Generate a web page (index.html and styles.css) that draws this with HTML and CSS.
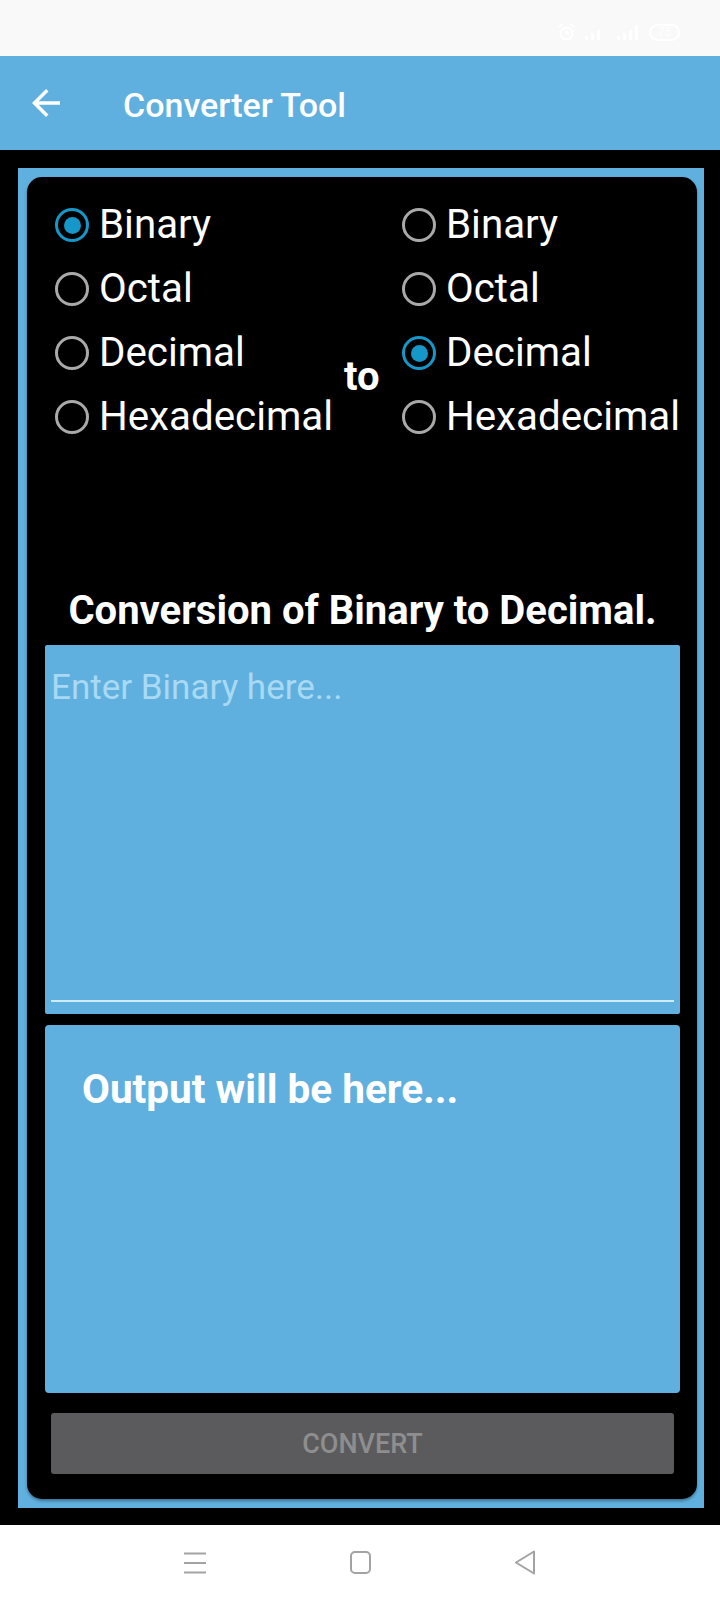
FILE: index.html
```html
<!DOCTYPE html>
<html lang="en">
<head>
<meta charset="utf-8">
<title>Converter Tool</title>
<link rel="stylesheet" href="styles.css">
</head>
<body>
<div class="status">
  <svg class="st-icons" width="84" height="20" viewBox="0 0 84 20" fill="none" stroke="#fff" stroke-width="2" stroke-linecap="round">
    <circle cx="10.5" cy="11.5" r="6"/>
    <path d="M3.5 4.5 L6.5 2 M17.5 4.5 L14.5 2 M10.5 8.5 V11.5 H13"/>
    <g fill="#fff" stroke="none">
      <rect x="29" y="14" width="3" height="4"/>
      <rect x="35" y="11" width="3" height="7"/>
      <rect x="41" y="8" width="3" height="10"/>
      <rect x="61" y="14" width="3" height="4"/>
      <rect x="67" y="11" width="3" height="7"/>
      <rect x="73" y="8" width="3" height="10"/>
      <rect x="79" y="3" width="3" height="15"/>
    </g>
  </svg>
  <span class="battery">75</span>
</div>

<header class="appbar">
  <svg class="back" width="42" height="42" viewBox="0 0 24 24"><path fill="#fff" d="M20 11H7.83l5.59-5.59L12 4l-8 8 8 8 1.41-1.41L7.83 13H20v-2z"/></svg>
  <h1 class="title">Converter Tool</h1>
</header>

<main class="main">
  <div class="frame">
    <div class="card">
      <div class="radios">
        <div class="col col-left">
          <div class="radio"><span class="dot on"></span>Binary</div>
          <div class="radio"><span class="dot"></span>Octal</div>
          <div class="radio"><span class="dot"></span>Decimal</div>
          <div class="radio"><span class="dot"></span>Hexadecimal</div>
        </div>
        <div class="to">to</div>
        <div class="col col-right">
          <div class="radio"><span class="dot"></span>Binary</div>
          <div class="radio"><span class="dot"></span>Octal</div>
          <div class="radio"><span class="dot on"></span>Decimal</div>
          <div class="radio"><span class="dot"></span>Hexadecimal</div>
        </div>
      </div>

      <h2 class="heading">Conversion of Binary to Decimal.</h2>

      <div class="input">
        <textarea class="field" placeholder="Enter Binary here..."></textarea>
      </div>

      <div class="output">Output will be here...</div>

      <button class="btn" type="button">CONVERT</button>
    </div>
  </div>
</main>

<nav class="nav">
  <div class="nav-item">
    <svg width="22" height="22" viewBox="0 0 22 22" stroke="#a3a3a3" stroke-width="2"><path d="M0 1.5H22M0 11H22M0 20.5H22"/></svg>
  </div>
  <div class="nav-item">
    <svg width="21" height="23" viewBox="0 0 21 23" fill="none" stroke="#a3a3a3" stroke-width="2"><rect x="1" y="1" width="19" height="21" rx="4"/></svg>
  </div>
  <div class="nav-item">
    <svg width="22" height="25" viewBox="0 0 22 25" fill="none" stroke="#a3a3a3" stroke-width="2" stroke-linejoin="round"><path d="M20 1.5 L2 12.5 L20 23.5 Z"/></svg>
  </div>
</nav>
</body>
</html>
```

FILE: styles.css
```css
* {
  box-sizing: border-box;
}

body {
  margin: 0;
  width: 720px;
  height: 1600px;
  display: flex;
  flex-direction: column;
  font-family: Roboto, "Noto Sans", "Liberation Sans", sans-serif;
  background: #000;
}

.status {
  height: 56px;
  flex: none;
  background: #f9f9f9;
  display: flex;
  justify-content: flex-end;
  align-items: center;
  padding: 8px 40px 0 0;
}

.battery {
  margin-left: 9px;
  width: 31px;
  height: 17px;
  border: 2px solid #fff;
  border-radius: 9px;
  color: #fff;
  font-size: 12px;
  line-height: 13px;
  text-align: center;
}

.appbar {
  height: 94px;
  flex: none;
  background: #5fb0df;
  display: flex;
  align-items: center;
}

.back {
  margin-left: 25px;
  flex: none;
}

.title {
  margin: 0 0 0 56px;
  padding-top: 4px;
  font-size: 34px;
  font-weight: 500;
  color: #fff;
}

.main {
  flex: 1;
  background: #000;
  padding: 18px 16px 17px 18px;
}

.frame {
  height: 100%;
  background: #5fb0df;
  padding: 9px 7px 9px 9px;
}

.card {
  height: 100%;
  background: #000;
  border-radius: 15px;
  padding: 16px 17px 25px 18px;
  box-shadow: 0 2px 3px rgba(0, 0, 0, 0.35);
  display: flex;
  flex-direction: column;
}

.radios {
  display: flex;
  margin-left: 10px;
  height: 256px;
}

.col {
  flex: none;
  display: flex;
  flex-direction: column;
}

.col-left {
  width: 289px;
}

.radio {
  height: 64px;
  display: flex;
  align-items: center;
  font-size: 40.3px;
  line-height: 64px;
  color: #fff;
  white-space: nowrap;
}

.dot {
  width: 34px;
  height: 34px;
  flex: none;
  margin-right: 10px;
  border: 3.3px solid #a9a9a9;
  border-radius: 50%;
  display: flex;
  align-items: center;
  justify-content: center;
}

.dot.on {
  border-color: #1597c9;
}

.dot.on::after {
  content: "";
  width: 17px;
  height: 17px;
  border-radius: 50%;
  background: #1597c9;
}

.to {
  flex: none;
  width: 58px;
  margin-top: 164px;
  font-size: 40px;
  line-height: 40px;
  font-weight: 700;
  color: #fff;
}

.heading {
  margin: 138px 0 0;
  font-size: 40px;
  line-height: 47px;
  font-weight: 700;
  color: #fff;
  text-align: center;
  white-space: nowrap;
}

.input {
  margin-top: 11px;
  height: 369px;
  flex: none;
  background: #5fb0df;
  border-radius: 2px;
  padding: 0 6px 12px;
  display: flex;
  flex-direction: column;
}

.field {
  flex: 1;
  width: 100%;
  margin: 0;
  resize: none;
  background: transparent;
  border: 0;
  border-bottom: 2px solid #cfeaf8;
  outline: none;
  padding: 22px 0 0;
  font-family: Roboto, "Noto Sans", sans-serif;
  font-size: 35px;
  line-height: 41px;
  color: #fff;
}

.field::placeholder {
  color: #a9d9f3;
  opacity: 1;
}

.output {
  margin-top: 11px;
  height: 368px;
  flex: none;
  background: #5fb0df;
  border-radius: 4px;
  padding: 41px 37px 0;
  font-size: 40.5px;
  line-height: 47px;
  font-weight: 700;
  color: #fff;
}

.btn {
  display: block;
  margin: 20px 6px 0;
  height: 61px;
  flex: none;
  border: 0;
  border-radius: 3px;
  background: #5b5b5d;
  font-family: Roboto, "Noto Sans", sans-serif;
  font-size: 27px;
  font-weight: 500;
  color: #8e8e8e;
  box-shadow: 0 1px 2px rgba(0, 0, 0, 0.4);
}

.nav {
  height: 75px;
  flex: none;
  background: #fff;
  display: flex;
  justify-content: center;
  align-items: center;
}

.nav-item {
  width: 165px;
  display: flex;
  justify-content: center;
  align-items: center;
}

.nav-item svg {
  display: block;
}
```
